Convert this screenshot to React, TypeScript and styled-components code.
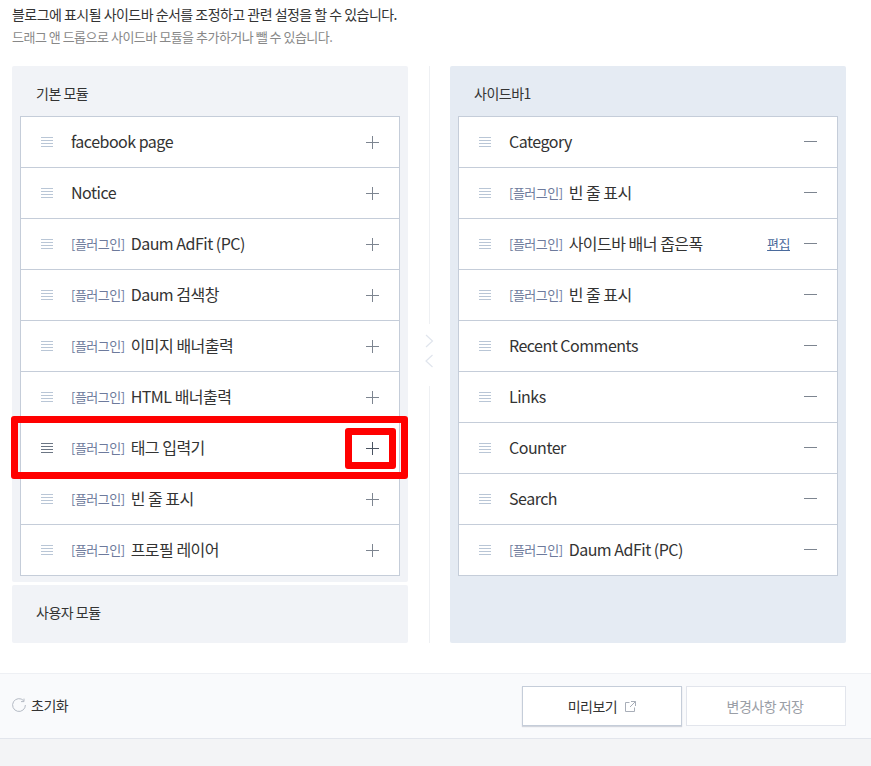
import React from "react";
import styled, { createGlobalStyle } from "styled-components";

const Global = createGlobalStyle`
  html, body { margin: 0; padding: 0; background: #fff; }
  body {
    font-family: "Noto Sans CJK KR", "Noto Sans", sans-serif;
    color: #333;
  }
`;

const Page = styled.div`
  width: 871px;
  height: 766px;
  overflow: hidden;
  background: #f3f4f6;
`;

const Content = styled.div`
  background: #fff;
  height: 673px;
  box-sizing: border-box;
  padding: 3px 25px 0 12px;
`;

const Lead = styled.p`
  margin: 0;
  font-size: 14px;
  line-height: 22px;
  letter-spacing: -0.53px;
  color: #333;
`;

const Sub = styled.p`
  margin: 1px 0 0;
  font-size: 13px;
  line-height: 22px;
  letter-spacing: -0.5px;
  color: #888;
`;

const Columns = styled.div`
  margin-top: 18px;
  display: grid;
  grid-template-columns: 396px 42px 396px;
  height: 577px;
`;

const LeftColumn = styled.div`
  display: flex;
  flex-direction: column;
  gap: 3px;
`;

const Panel = styled.section<{ $tone: string; $grow?: boolean }>`
  background: ${(p) => p.$tone};
  padding: 0 8px 6px;
  border-radius: 2px;
  ${(p) => (p.$grow ? "flex: 1;" : "")}
`;

const PanelTitle = styled.h3`
  margin: 0;
  padding: 3px 16px 0;
  box-sizing: border-box;
  height: 50px;
  display: flex;
  align-items: center;
  font-size: 14px;
  font-weight: 400;
  letter-spacing: -0.5px;
  color: #333;
`;

const List = styled.ul`
  margin: 0;
  padding: 0;
  list-style: none;
  background: #fff;
  border: 1px solid #c5cdd9;
  border-bottom-width: 0;
`;

const Row = styled.li`
  position: relative;
  height: 50px;
  border-bottom: 1px solid #c5cdd9;
  display: flex;
  align-items: center;
  padding-left: 20px;
`;

const Label = styled.span`
  margin: 0 0 2px 18px;
  font-size: 16px;
  letter-spacing: -0.5px;
  color: #333;
  white-space: nowrap;
`;

const Tag = styled.span`
  font-size: 13px;
  letter-spacing: -0.5px;
  color: #6d7a9c;
  margin-right: 6px;
  position: relative;
  top: -1px;
`;

const EditLink = styled.a`
  margin: 0 0 2px auto;
  font-size: 13px;
  letter-spacing: -0.5px;
  color: #4a6a9c;
  text-decoration: underline;
`;

const Action = styled.button<{ $push: boolean }>`
  margin-left: ${(p) => (p.$push ? "auto" : "14px")};
  margin-right: 20px;
  padding: 0;
  border: 0;
  background: none;
  width: 13px;
  height: 13px;
  display: flex;
`;

const DividerColumn = styled.div`
  display: flex;
  flex-direction: column;
  align-items: center;
`;

const DividerLine = styled.div`
  width: 1px;
  background: #eef0f3;
  flex: 1;
`;

const Arrows = styled.div`
  height: 62px;
  box-sizing: border-box;
  padding-bottom: 7px;
  display: flex;
  align-items: center;
`;

const Highlight = styled.div`
  position: absolute;
  left: -10px;
  top: -7px;
  width: 397px;
  height: 63px;
  box-sizing: border-box;
  border: 7px solid #f00;
  border-radius: 3px;
  pointer-events: none;
`;

const HighlightInner = styled.div`
  position: absolute;
  left: 324px;
  top: 5px;
  width: 51px;
  height: 41px;
  box-sizing: border-box;
  border: 7px solid #f00;
  border-radius: 3px;
  pointer-events: none;
`;

const Footer = styled.footer`
  height: 66px;
  box-sizing: border-box;
  background: #f9fafc;
  border-top: 1px solid #eef0f4;
  border-bottom: 1px solid #e2e5ec;
  display: flex;
  align-items: center;
  padding: 0 25px 0 12px;
`;

const Reset = styled.button`
  display: flex;
  align-items: center;
  gap: 5px;
  border: 0;
  padding: 0;
  background: none;
  font: inherit;
  font-size: 14px;
  letter-spacing: -0.5px;
  color: #333;
  margin-top: -2px;
`;

const Buttons = styled.div`
  margin-left: auto;
  display: flex;
  gap: 4px;
`;

const FootButton = styled.button<{ $disabled?: boolean }>`
  width: 160px;
  height: 40px;
  box-sizing: border-box;
  background: #fff;
  font: inherit;
  font-size: 14px;
  letter-spacing: -0.5px;
  display: flex;
  align-items: center;
  justify-content: center;
  gap: 8px;
  padding: 0 ${(p) => (p.$disabled ? "2px" : "0")} 0 0;
  border: 1px solid ${(p) => (p.$disabled ? "#e2e5ec" : "#c5cdd9")};
  color: ${(p) => (p.$disabled ? "#9a9ea6" : "#333")};
  ${(p) => (p.$disabled ? "" : "box-shadow: 0 1px 1px rgba(120,130,150,0.3);")}
`;

const Handle = ({ dark }: { dark?: boolean }) => (
  <svg width="12" height="10" viewBox="0 0 12 10" stroke={dark ? "#6c7684" : "#b9c6d6"} strokeWidth="1">
    <path d="M0 .5h12M0 3.5h12M0 6.5h12M0 9.5h12" />
  </svg>
);

const Plus = ({ dark }: { dark?: boolean }) => (
  <svg width="13" height="13" viewBox="0 0 13 13" stroke={dark ? "#4a5361" : "#7d8590"} strokeWidth="1">
    <path d="M0 6.5h13M6.5 0v13" />
  </svg>
);

const Minus = () => (
  <svg width="13" height="13" viewBox="0 0 13 13" stroke="#7d8590" strokeWidth="1">
    <path d="M0 5.5h13" />
  </svg>
);

type Item = { name: string; plugin?: boolean; edit?: boolean; marked?: boolean };

const basic: Item[] = [
  { name: "facebook page" },
  { name: "Notice" },
  { name: "Daum AdFit (PC)", plugin: true },
  { name: "Daum 검색창", plugin: true },
  { name: "이미지 배너출력", plugin: true },
  { name: "HTML 배너출력", plugin: true },
  { name: "태그 입력기", plugin: true, marked: true },
  { name: "빈 줄 표시", plugin: true },
  { name: "프로필 레이어", plugin: true },
];

const sidebar: Item[] = [
  { name: "Category" },
  { name: "빈 줄 표시", plugin: true },
  { name: "사이드바 배너 좁은폭", plugin: true, edit: true },
  { name: "빈 줄 표시", plugin: true },
  { name: "Recent Comments" },
  { name: "Links" },
  { name: "Counter" },
  { name: "Search" },
  { name: "Daum AdFit (PC)", plugin: true },
];

const ModuleList = ({ items, added }: { items: Item[]; added?: boolean }) => (
  <List>
    {items.map((item, i) => (
      <Row key={i}>
        <Handle dark={item.marked} />
        <Label>
          {item.plugin && <Tag>[플러그인]</Tag>}
          {item.name}
        </Label>
        {item.edit && <EditLink>편집</EditLink>}
        <Action $push={!item.edit}>{added ? <Minus /> : <Plus dark={item.marked} />}</Action>
        {item.marked && (
          <>
            <Highlight />
            <HighlightInner />
          </>
        )}
      </Row>
    ))}
  </List>
);

export default function App() {
  return (
    <Page>
      <Global />
      <Content>
        <Lead>블로그에 표시될 사이드바 순서를 조정하고 관련 설정을 할 수 있습니다.</Lead>
        <Sub>드래그 앤 드롭으로 사이드바 모듈을 추가하거나 뺄 수 있습니다.</Sub>
        <Columns>
          <LeftColumn>
            <Panel $tone="#f1f3f7">
              <PanelTitle>기본 모듈</PanelTitle>
              <ModuleList items={basic} />
            </Panel>
            <Panel $tone="#f1f3f7" $grow>
              <PanelTitle>사용자 모듈</PanelTitle>
            </Panel>
          </LeftColumn>
          <DividerColumn>
            <DividerLine />
            <Arrows>
              <svg width="9" height="34" viewBox="0 0 9 34" fill="none" stroke="#e0e5ed" strokeWidth="1.2">
                <path d="M1 1l6.5 6-6.5 6M7.5 21L1 27l6.5 6" />
              </svg>
            </Arrows>
            <DividerLine />
          </DividerColumn>
          <Panel $tone="#e5ebf3">
            <PanelTitle>사이드바1</PanelTitle>
            <ModuleList items={sidebar} added />
          </Panel>
        </Columns>
      </Content>
      <Footer>
        <Reset>
          <svg width="14" height="14" viewBox="0 0 14 14" fill="none" stroke="#b4bac4" strokeWidth="1">
            <path d="M13.4 7A6.4 6.4 0 1 1 11.6 2.6M12 .6v3H9" />
          </svg>
          초기화
        </Reset>
        <Buttons>
          <FootButton>
            미리보기
            <svg width="11" height="11" viewBox="0 0 11 11" fill="none" stroke="#a8aeb8" strokeWidth="1">
              <path d="M4.5 1.5H.5v9h9V6.5M6 .5h4.5V5M10.5 .5L5 6" />
            </svg>
          </FootButton>
          <FootButton $disabled>변경사항 저장</FootButton>
        </Buttons>
      </Footer>
    </Page>
  );
}
